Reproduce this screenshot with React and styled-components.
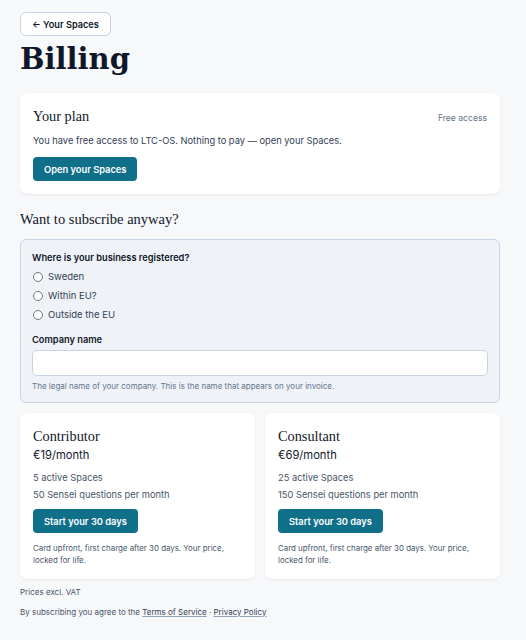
import React from "react";
import styled, { createGlobalStyle } from "styled-components";

const Global = createGlobalStyle`
  html, body { margin: 0; padding: 0; background: #f7f8fa; }
  body { font-family: Inter, "Noto Sans", sans-serif; color: #0f172a; }
  * { box-sizing: border-box; }
`;

const Page = styled.div`
  padding: 12px 26px 20px 20px;
  display: flex;
  flex-direction: column;
  align-items: stretch;
`;

const BackButton = styled.button`
  align-self: flex-start;
  height: 24px;
  padding: 0 11px;
  border: 1px solid #cbd5e1;
  border-radius: 6px;
  background: #fff;
  font-family: Inter, sans-serif;
  font-weight: 600;
  font-size: 9.2px;
  color: #0f172a;
`;

const Title = styled.h1`
  margin: 6px 0 17px;
  font-family: "DejaVu Serif", serif;
  font-weight: 700;
  font-size: 29px;
  line-height: 34px;
  color: #0f172a;
`;

const Card = styled.section`
  background: #fff;
  border-radius: 7px;
  box-shadow: 0 1px 2px rgba(15, 23, 42, 0.08);
  padding: 13px;
  display: flex;
  flex-direction: column;
`;

const CardHead = styled.div`
  display: flex;
  justify-content: space-between;
  align-items: baseline;
`;

const SerifTitle = styled.h2`
  margin: 0;
  font-family: "Liberation Serif", serif;
  font-weight: 400;
  font-size: 14.3px;
  line-height: 20px;
  color: #0f172a;
`;

const Muted = styled.span`
  font-size: 8.6px;
  color: #64748b;
`;

const Text = styled.p`
  margin: ${(p) => p.$m || "0"};
  font-size: ${(p) => p.$size || "9.3px"};
  line-height: ${(p) => p.$lh || "14px"};
  color: ${(p) => p.$color || "#334155"};
`;

const Primary = styled.button`
  align-self: flex-start;
  height: 24px;
  padding: 0 11px;
  border: none;
  border-radius: 4px;
  background: #10708a;
  color: #fff;
  font-family: Inter, sans-serif;
  font-weight: 600;
  font-size: 9.3px;
  margin: ${(p) => p.$m || "0"};
`;

const Section = styled.h2`
  margin: 15px 0 10px;
  font-family: "Liberation Serif", serif;
  font-weight: 400;
  font-size: 14.5px;
  line-height: 20px;
  color: #0f172a;
`;

const Panel = styled.div`
  background: #eff3f8;
  border: 1px solid #c8d4e3;
  border-radius: 6px;
  padding: 11px 11px 9px 11px;
  display: flex;
  flex-direction: column;
`;

const Label = styled.div`
  font-size: 9.25px;
  font-weight: 600;
  color: #0f172a;
  line-height: 14px;
`;

const RadioList = styled.div`
  display: flex;
  flex-direction: column;
  gap: 5px;
  margin: 5px 0 11px;
`;

const RadioRow = styled.label`
  display: flex;
  align-items: center;
  gap: 5px;
  font-size: 9.5px;
  color: #334155;
  line-height: 14px;
`;

const Circle = styled.span`
  width: 10px;
  height: 10px;
  border-radius: 50%;
  border: 1px solid #767676;
  background: #fff;
  margin-left: 1px;
`;

const Input = styled.div`
  height: 26px;
  margin-top: 3px;
  background: #fff;
  border: 1px solid #c8d4e3;
  border-radius: 5px;
`;

const Plans = styled.div`
  display: grid;
  grid-template-columns: 1fr 1fr;
  gap: 10px;
  margin-top: 10px;
`;

const Footer = styled.div`
  margin-top: 6px;
  display: flex;
  flex-direction: column;
  gap: 6px;
`;

const Link = styled.a`
  color: #334155;
  text-decoration: underline;
  text-decoration-color: #94a3b8;
`;

const plans = [
  { name: "Contributor", price: "€19/month", spaces: "5 active Spaces", q: "50 Sensei questions per month" },
  { name: "Consultant", price: "€69/month", spaces: "25 active Spaces", q: "150 Sensei questions per month" },
];

export default function App() {
  return (
    <>
      <Global />
      <Page>
        <BackButton>← Your Spaces</BackButton>
        <Title>Billing</Title>
        <Card>
          <CardHead>
            <SerifTitle>Your plan</SerifTitle>
            <Muted>Free access</Muted>
          </CardHead>
          <Text $m="8px 0 0">You have free access to LTC-OS. Nothing to pay — open your Spaces.</Text>
          <Primary $m="9px 0 0">Open your Spaces</Primary>
        </Card>
        <Section>Want to subscribe anyway?</Section>
        <Panel>
          <Label>Where is your business registered?</Label>
          <RadioList>
            {["Sweden", "Within EU?", "Outside the EU"].map((o) => (
              <RadioRow key={o}>
                <Circle />
                {o}
              </RadioRow>
            ))}
          </RadioList>
          <Label>Company name</Label>
          <Input />
          <Text $size="8px" $color="#64748b" $m="3px 0 0">
            The legal name of your company. This is the name that appears on your invoice.
          </Text>
        </Panel>
        <Plans>
          {plans.map((p) => (
            <Card key={p.name}>
              <SerifTitle>{p.name}</SerifTitle>
              <Text $size="11.2px" $lh="18px" $color="#0f172a">{p.price}</Text>
              <Text $m="5px 0 0" $lh="17px" $color="#475569">{p.spaces}</Text>
              <Text $lh="17px" $color="#475569">{p.q}</Text>
              <Primary $m="6px 0 0">Start your 30 days</Primary>
              <Text $size="7.9px" $lh="12px" $color="#475569" $m="9px 0 0">
                Card upfront, first charge after 30 days. Your price, locked for life.
              </Text>
            </Card>
          ))}
        </Plans>
        <Footer>
          <Text $size="8px" $color="#475569">Prices excl. VAT</Text>
          <Text $size="8px" $color="#475569">
            By subscribing you agree to the <Link>Terms of Service</Link> · <Link>Privacy Policy</Link>
          </Text>
        </Footer>
      </Page>
    </>
  );
}
